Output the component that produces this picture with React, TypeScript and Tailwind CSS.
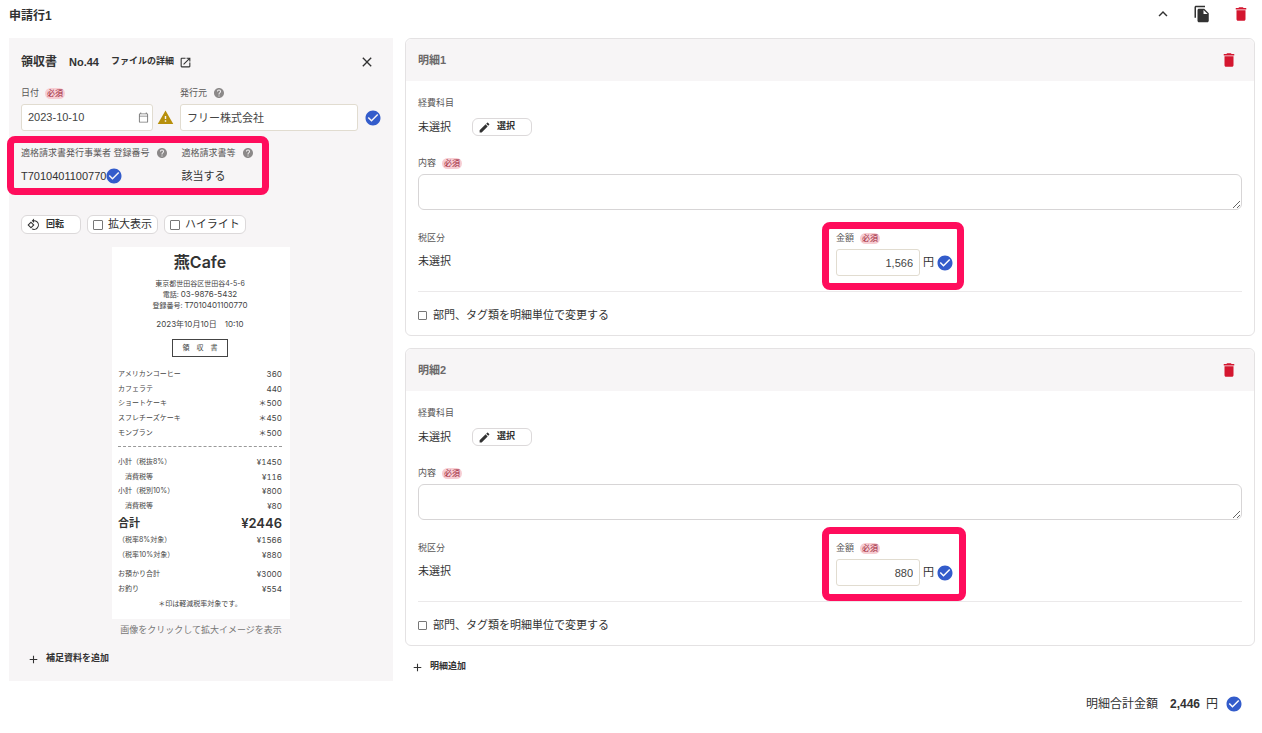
import type { ReactNode } from "react";
import {
  MdAdd,
  MdCheckCircle,
  MdClose,
  MdCreate,
  MdDelete,
  MdFileCopy,
  MdHelp,
  MdKeyboardArrowUp,
  MdOpenInNew,
  MdOutlineCalendarToday,
  MdRotate90DegreesCcw,
  MdWarning,
} from "react-icons/md";

interface Detail {
  id: number;
  amount: string;
  frame: string;
}

const details: Detail[] = [
  { id: 1, amount: "1,566", frame: "-left-[14px] -right-[11px] -top-[9px] -bottom-[14px]" },
  { id: 2, amount: "880", frame: "-left-[14px] -right-[13px] -top-[14px] -bottom-[15px]" },
];

const items = [
  ["アメリカンコーヒー", "360"],
  ["カフェラテ", "440"],
  ["ショートケーキ", "＊500"],
  ["スフレチーズケーキ", "＊450"],
  ["モンブラン", "＊500"],
];

const subtotals = [
  ["小計（税抜8%）", "¥1450"],
  ["　消費税等", "¥116"],
  ["小計（税別10%）", "¥800"],
  ["　消費税等", "¥80"],
];

const taxTargets = [
  ["（税率8%対象）", "¥1566"],
  ["（税率10%対象）", "¥880"],
];

const payments = [
  ["お預かり合計", "¥3000"],
  ["お釣り", "¥554"],
];

function Check() {
  return <MdCheckCircle size={18} className="-m-px shrink-0 text-[#335ccb]" />;
}

function Help() {
  return <MdHelp size={12} className="shrink-0 text-[#8c8989]" />;
}

function Required() {
  return (
    <span className="rounded-full bg-[#f7cdd3] px-[2px] text-[8px] leading-[11px] text-[#9b1c37]">必須</span>
  );
}

function Label({ htmlFor, children }: { htmlFor?: string; children: ReactNode }) {
  const className = "flex h-[14px] items-center text-[9px] leading-[14px] text-[#595757]";
  if (htmlFor) {
    return (
      <label htmlFor={htmlFor} className={className}>
        {children}
      </label>
    );
  }
  return <div className={className}>{children}</div>;
}

function Frame({ className }: { className: string }) {
  return <div className={`pointer-events-none absolute rounded-lg border-[7px] border-[#ff0d5c] ${className}`} />;
}

function ReceiptRows({ rows, className }: { rows: string[][]; className: string }) {
  return (
    <div className={`flex flex-col justify-around ${className}`}>
      {rows.map(([name, value], i) => (
        <div key={i} className="flex items-center justify-between leading-[14px]">
          <span className="text-[7px]">{name}</span>
          <span className="text-[8px] tabular-nums">{value}</span>
        </div>
      ))}
    </div>
  );
}

function Receipt() {
  return (
    <div className="mx-auto mt-[13px] flex h-[372px] w-[178px] flex-col bg-white pr-2 pl-[6px] font-['Inter','Noto_Sans_CJK_JP',sans-serif] text-[7px] text-[#444]">
      <div className="mt-[5px] text-center text-[16px] leading-5 font-semibold text-[#333]">燕Cafe</div>
      <div className="mt-[6px] text-center leading-[11px]">
        <div>東京都世田谷区世田谷4-5-6</div>
        <div>
          電話: <span className="text-[8px]">03-9876-5432</span>
        </div>
        <div>
          登録番号: <span className="text-[8px]">T7010401100770</span>
        </div>
      </div>
      <div className="mt-2 text-center text-[8px] leading-[11px]">2023年10月10日　10:10</div>
      <div className="mx-auto mt-[9px] flex h-[18px] w-14 items-center justify-center border border-[#444]">
        領　収　書
      </div>
      <ReceiptRows rows={items} className="mt-[10px] h-[73px]" />
      <div className="mt-[6px] mb-2 border-t border-dashed border-[#999]" />
      <ReceiptRows rows={subtotals} className="h-[58px]" />
      <div className="mt-[1px] flex items-center justify-between leading-[18px] font-semibold text-[#333]">
        <span className="text-[11px]">合計</span>
        <span className="text-[13px]">¥2446</span>
      </div>
      <ReceiptRows rows={taxTargets} className="mt-[1px] h-[29px]" />
      <ReceiptRows rows={payments} className="mt-[5px] h-[29px]" />
      <div className="mt-[1px] text-center leading-[14px]">＊印は軽減税率対象です。</div>
    </div>
  );
}

function ReceiptPanel() {
  return (
    <section className="flex w-96 shrink-0 flex-col bg-[#f7f5f6] px-3 pt-3 pb-[13px]">
      <div className="flex h-6 items-center">
        <h2 className="text-[12px] font-bold">領収書</h2>
        <span className="ml-3 text-[11px] font-bold">No.44</span>
        <a href="#file" className="ml-3 flex items-center gap-[5px] text-[9px] font-bold">
          ファイルの詳細
          <MdOpenInNew size={13} />
        </a>
        <button type="button" aria-label="閉じる" className="mr-[6px] ml-auto">
          <MdClose size={16} />
        </button>
      </div>

      <div className="mt-3 flex">
        <div className="w-[159px]">
          <Label htmlFor="date">
            <span className="mr-[6px]">日付</span>
            <Required />
          </Label>
          <div className="mt-1 flex items-center gap-1">
            <div className="flex h-[27px] w-[132px] items-center rounded-[3px] border border-[#e1dcd0] bg-white pr-[3px] pl-[6px]">
              <input id="date" defaultValue="2023-10-10" className="w-full min-w-0 text-[11px] text-[#444] outline-none" />
              <MdOutlineCalendarToday size={11} className="shrink-0 text-[#777]" />
            </div>
            <MdWarning size={17} className="text-[#b78f0b]" />
          </div>
        </div>
        <div className="flex-1">
          <Label htmlFor="issuer">
            <span className="mr-[6px]">発行元</span>
            <Help />
          </Label>
          <div className="mt-1 flex items-center gap-[7px]">
            <input
              id="issuer"
              defaultValue="フリー株式会社"
              className="h-[27px] w-full min-w-0 rounded-[3px] border border-[#e1dcd0] bg-white px-[6px] pb-[2px] text-[11px] text-[#444] outline-none"
            />
            <Check />
          </div>
        </div>
      </div>

      <div className="relative mt-[15px] flex gap-[14px] self-start">
        <div>
          <Label>
            <span className="mr-[6px]">適格請求書発行事業者 登録番号</span>
            <Help />
          </Label>
          <div className="mt-2 flex h-4 items-center text-[11px]">
            T7010401100770
            <Check />
          </div>
        </div>
        <div>
          <Label>
            <span className="mr-[6px]">適格請求書等</span>
            <Help />
          </Label>
          <div className="mt-2 flex h-4 items-center text-[11px]">該当する</div>
        </div>
        <Frame className="-top-[10px] -right-[15px] -bottom-[11px] -left-[14px]" />
      </div>

      <div className="mt-[31px] flex h-[19px] gap-[6px] text-[11px]">
        <button
          type="button"
          className="flex w-[60px] items-center gap-[6px] rounded-md border border-[#dcd9da] bg-white pl-[5px] text-[9px] font-bold"
        >
          <MdRotate90DegreesCcw size={13} />
          回転
        </button>
        <label className="flex items-center gap-[5px] rounded-md border border-[#dcd9da] bg-white px-[5px]">
          <input type="checkbox" className="size-[10px] appearance-none rounded-[1px] border border-[#777] bg-white" />
          拡大表示
        </label>
        <label className="flex items-center gap-[5px] rounded-md border border-[#dcd9da] bg-white px-[5px]">
          <input type="checkbox" className="size-[10px] appearance-none rounded-[1px] border border-[#777] bg-white" />
          ハイライト
        </label>
      </div>

      <Receipt />
      <p className="mt-1 text-center text-[9px] leading-[14px] text-[#777]">画像をクリックして拡大イメージを表示</p>
      <button type="button" className="mt-[13px] flex h-[18px] items-center gap-[6px] self-start pl-[6px] text-[9px] font-bold">
        <MdAdd size={13} />
        補足資料を追加
      </button>
    </section>
  );
}

function DetailCard({ detail }: { detail: Detail }) {
  return (
    <section className="rounded-md border border-[#e4e2e3]">
      <div className="flex h-[42px] items-center justify-between rounded-t-md bg-[#f7f5f6] px-3">
        <h3 className="text-[11px] font-bold text-[#6b6868]">明細{detail.id}</h3>
        <button type="button" aria-label="明細を削除" className="mr-1 text-[#d4162f]">
          <MdDelete size={18} />
        </button>
      </div>
      <div className="px-3 pt-[15px] pb-[10px]">
        <Label>経費科目</Label>
        <div className="mt-2 flex h-[18px] items-center text-[11px]">
          <span className="w-[54px]">未選択</span>
          <button
            type="button"
            className="flex h-[18px] w-[60px] items-center gap-[6px] rounded-md border border-[#dcd9da] pl-[5px] text-[9px] font-bold"
          >
            <MdCreate size={13} />
            選択
          </button>
        </div>

        <div className="mt-5">
          <Label htmlFor={`content-${detail.id}`}>
            <span className="mr-[6px]">内容</span>
            <Required />
          </Label>
          <textarea
            id={`content-${detail.id}`}
            className="mt-1 block h-9 w-full rounded-md border border-[#d7d5d6] px-2 py-1 text-[11px] outline-none"
          />
        </div>

        <div className="mt-[21px] flex">
          <div className="w-[418px]">
            <Label>税区分</Label>
            <div className="mt-2 text-[11px] leading-4">未選択</div>
          </div>
          <div className="relative">
            <Label htmlFor={`amount-${detail.id}`}>
              <span className="mr-[6px]">金額</span>
              <Required />
            </Label>
            <div className="mt-1 flex items-center text-[11px]">
              <input
                id={`amount-${detail.id}`}
                defaultValue={detail.amount}
                className="mr-[3px] h-[27px] w-[84px] rounded-[3px] border border-[#e1dcd0] px-[6px] text-right text-[#444] outline-none"
              />
              <span className="mr-[3px]">円</span>
              <Check />
            </div>
            <Frame className={detail.frame} />
          </div>
        </div>

        <hr className="mt-[15px] border-[#ebe9ea]" />
        <label className="mt-[13px] flex h-5 items-center gap-[6px] text-[11px]">
          <input type="checkbox" className="size-[9px] appearance-none rounded-[1px] border border-[#777]" />
          部門、タグ類を明細単位で変更する
        </label>
      </div>
    </section>
  );
}

export default function App() {
  return (
    <main
      lang="ja"
      className="min-h-screen bg-white pr-[7px] pl-[9px] font-['Liberation_Sans','Noto_Sans_CJK_JP',sans-serif] text-[#323232]"
    >
      <header className="flex h-[38px] items-start justify-between pt-[6px]">
        <h1 className="text-[12px] leading-5 font-bold">申請行1</h1>
        <div className="flex h-4 items-center gap-[21px] pr-[5px]">
          <button type="button" aria-label="折りたたむ">
            <MdKeyboardArrowUp size={18} />
          </button>
          <button type="button" aria-label="複製">
            <MdFileCopy size={18} />
          </button>
          <button type="button" aria-label="削除" className="text-[#d4162f]">
            <MdDelete size={18} />
          </button>
        </div>
      </header>

      <div className="flex gap-3">
        <ReceiptPanel />
        <div className="flex min-w-0 flex-1 flex-col">
          <div className="flex flex-col gap-3">
            {details.map((detail) => (
              <DetailCard key={detail.id} detail={detail} />
            ))}
          </div>
          <button type="button" className="mt-3 flex h-[18px] items-center gap-[6px] self-start pl-[6px] text-[9px] font-bold">
            <MdAdd size={13} />
            明細追加
          </button>
        </div>
      </div>

      <div className="mt-[14px] flex h-[18px] items-center justify-end pr-[13px] text-[12px]">
        <span className="mr-3">明細合計金額</span>
        <strong className="mr-[6px]">2,446</strong>
        <span className="mr-2">円</span>
        <Check />
      </div>
    </main>
  );
}
